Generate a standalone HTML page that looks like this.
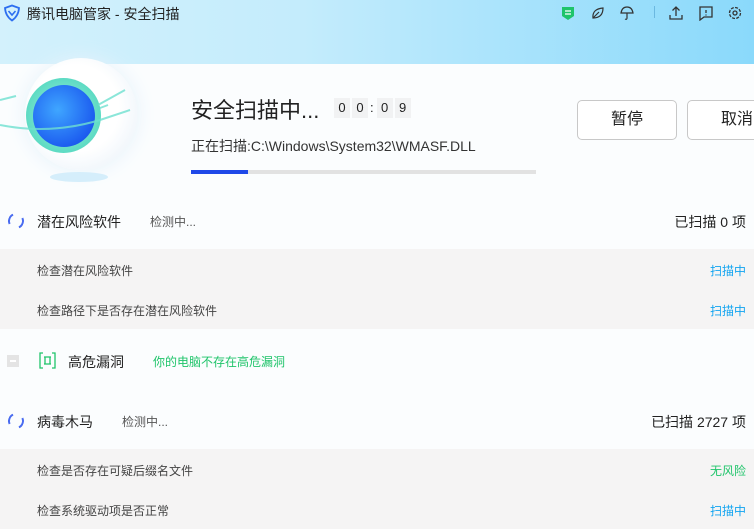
<!DOCTYPE html>
<html><head><meta charset="utf-8"><style>
*{margin:0;padding:0;box-sizing:border-box}
body{width:754px;height:529px;overflow:hidden;position:relative;background:#fbfdfe;font-family:"Liberation Sans","Noto Sans CJK SC",sans-serif;color:#222}
.hdr{position:absolute;left:0;top:0;width:754px;height:64px;background:linear-gradient(90deg,#d3f1fc 0%,#c4ecfc 40%,#8ad9fb 100%)}
.t{position:absolute;font-size:14px;white-space:nowrap}
.gray{position:absolute;left:0;width:754px;height:80px;background:#f5f4f4}
.btn{position:absolute;top:100px;height:40px;border:1px solid #c8c8c8;border-radius:5px;background:#fff;font-size:16px;text-align:center;line-height:38px;color:#222}
.dg{display:inline-block;width:16px;height:20px;background:#f1f2f3;text-align:center;line-height:20px;font-size:13px;margin-right:2px}
.spin{position:absolute;width:16px;height:16px;border-radius:50%;border:2px solid #4a6cf0;border-top-color:transparent;border-bottom-color:transparent;transform:rotate(20deg)}
</style></head><body>
<div class="hdr"></div>
<svg style="position:absolute;left:3px;top:4px" width="18" height="18" viewBox="0 0 18 18"><path d="M9 1.5 L16 4 Q15.5 12 9 16.5 Q2.5 12 2 4 Z" fill="none" stroke="#2d6ff0" stroke-width="1.8"/><path d="M5.5 7 L9 11 L12.5 7" fill="none" stroke="#2d6ff0" stroke-width="1.6"/></svg>
<div class="t" style="left:27px;top:4px;font-size:14px;color:#222">腾讯电脑管家 - 安全扫描</div>
<svg style="position:absolute;left:560px;top:5px" width="16" height="16"><path d="M2 2h12v9l-6 4-6-4z" fill="#1fc46a"/><path d="M5 6h6M5 9h6" stroke="#fff" stroke-width="1.3"/></svg>
<svg style="position:absolute;left:590px;top:5px" width="16" height="16" fill="none" stroke="#333" stroke-width="1.2"><path d="M3 13 Q2 4 13 3 Q13 13 3 13 Z M3 13 L9 7"/></svg>
<svg style="position:absolute;left:619px;top:5px" width="16" height="16" fill="none" stroke="#333" stroke-width="1.2"><path d="M2 8 Q3 2 8 2 Q13 2 14 8 Z M8 8 V13 Q8 15 6 14"/></svg>
<div style="position:absolute;left:654px;top:6px;width:1px;height:12px;background:#6bb8e0"></div>
<svg style="position:absolute;left:668px;top:5px" width="16" height="16" fill="none" stroke="#333" stroke-width="1.3"><path d="M8 11V2M4.5 5.5 8 2l3.5 3.5M2 10v4h12v-4"/></svg>
<svg style="position:absolute;left:698px;top:5px" width="16" height="16" fill="none" stroke="#333" stroke-width="1.3"><path d="M2 2h12v10H6l-4 3z"/><path d="M8 5v3M8 9.5v1"/></svg>
<svg style="position:absolute;left:727px;top:5px" width="16" height="16" fill="none" stroke="#333" stroke-width="1.3"><circle cx="8" cy="8" r="5.5" stroke-dasharray="3 1.3"/><circle cx="8" cy="8" r="2"/></svg>

<div style="position:absolute;left:25px;top:58px;width:112px;height:112px;border-radius:50%;background:radial-gradient(circle at 45% 45%,#fff 50%,#e3eef8 100%);box-shadow:0 0 20px #e6f2fb"></div>
<div style="position:absolute;left:50px;top:172px;width:58px;height:10px;border-radius:50%;background:#d5eefb"></div>
<div style="position:absolute;left:26px;top:78px;width:75px;height:75px;border-radius:50%;background:radial-gradient(circle,#6ee0c9 55%,#3cd1b8 100%)"></div>
<div style="position:absolute;left:33px;top:85px;width:62px;height:62px;border-radius:50%;background:radial-gradient(circle at 40% 40%,#3fa6ff,#1d5ef0 70%,#1544d8)"></div>
<svg style="position:absolute;left:0;top:70px" width="160" height="80"><path d="M0 30 L16 26 M0 55 Q50 65 100 50 L130 40 M98 35 L125 20 M100 38 L108 35" stroke="#6ee0d0" stroke-width="2" fill="none" opacity=".8"/></svg>

<div class="t" style="left:191px;top:93px;font-size:22px;color:#222">安全扫描中...</div>
<div style="position:absolute;left:334px;top:98px;font-size:13px;color:#222"><span class="dg">0</span><span class="dg">0</span><span style="margin-right:3px">:</span><span class="dg">0</span><span class="dg">9</span></div>
<div class="t" style="left:191px;top:136px;color:#333">正在扫描:C:\Windows\System32\WMASF.DLL</div>
<div style="position:absolute;left:191px;top:170px;width:345px;height:4px;background:#e2e2e2"></div>
<div style="position:absolute;left:191px;top:170px;width:57px;height:4px;background:#1f48e8"></div>
<div class="btn" style="left:577px;width:100px">暂停</div>
<div class="btn" style="left:687px;width:100px">取消</div>

<div class="spin" style="left:8px;top:213px"></div>
<div class="t" style="left:37px;top:212px">潜在风险软件</div>
<div class="t" style="left:150px;top:213px;font-size:12px;color:#555">检测中...</div>
<div class="t" style="right:8px;top:212px">已扫描 0 项</div>
<div class="gray" style="top:249px"></div>
<div class="t" style="left:37px;top:262px;font-size:12px;color:#444">检查潜在风险软件</div>
<div class="t" style="right:8px;top:262px;font-size:12px;color:#12a4f0">扫描中</div>
<div class="t" style="left:37px;top:302px;font-size:12px;color:#444">检查路径下是否存在潜在风险软件</div>
<div class="t" style="right:8px;top:302px;font-size:12px;color:#12a4f0">扫描中</div>

<div style="position:absolute;left:7px;top:355px;width:12px;height:12px;background:#e4e4e4"><div style="margin:5px 3px;height:2px;background:#fff"></div></div>
<svg style="position:absolute;left:39px;top:352px" width="17" height="17" fill="none" stroke="#1fc46a" stroke-width="1.3"><path d="M4 1H1v15h3M13 1h3v15h-3M5 5h7M5 12h7M6 5v7M11 5v7"/></svg>
<div class="t" style="left:68px;top:352px">高危漏洞</div>
<div class="t" style="left:153px;top:353px;font-size:12px;color:#1fc46a">你的电脑不存在高危漏洞</div>

<div class="spin" style="left:8px;top:413px"></div>
<div class="t" style="left:37px;top:412px">病毒木马</div>
<div class="t" style="left:122px;top:413px;font-size:12px;color:#555">检测中...</div>
<div class="t" style="right:8px;top:412px">已扫描 2727 项</div>
<div class="gray" style="top:449px"></div>
<div class="t" style="left:37px;top:462px;font-size:12px;color:#444">检查是否存在可疑后缀名文件</div>
<div class="t" style="right:8px;top:462px;font-size:12px;color:#1fc46a">无风险</div>
<div class="t" style="left:37px;top:502px;font-size:12px;color:#444">检查系统驱动项是否正常</div>
<div class="t" style="right:8px;top:502px;font-size:12px;color:#12a4f0">扫描中</div>
</body></html>
